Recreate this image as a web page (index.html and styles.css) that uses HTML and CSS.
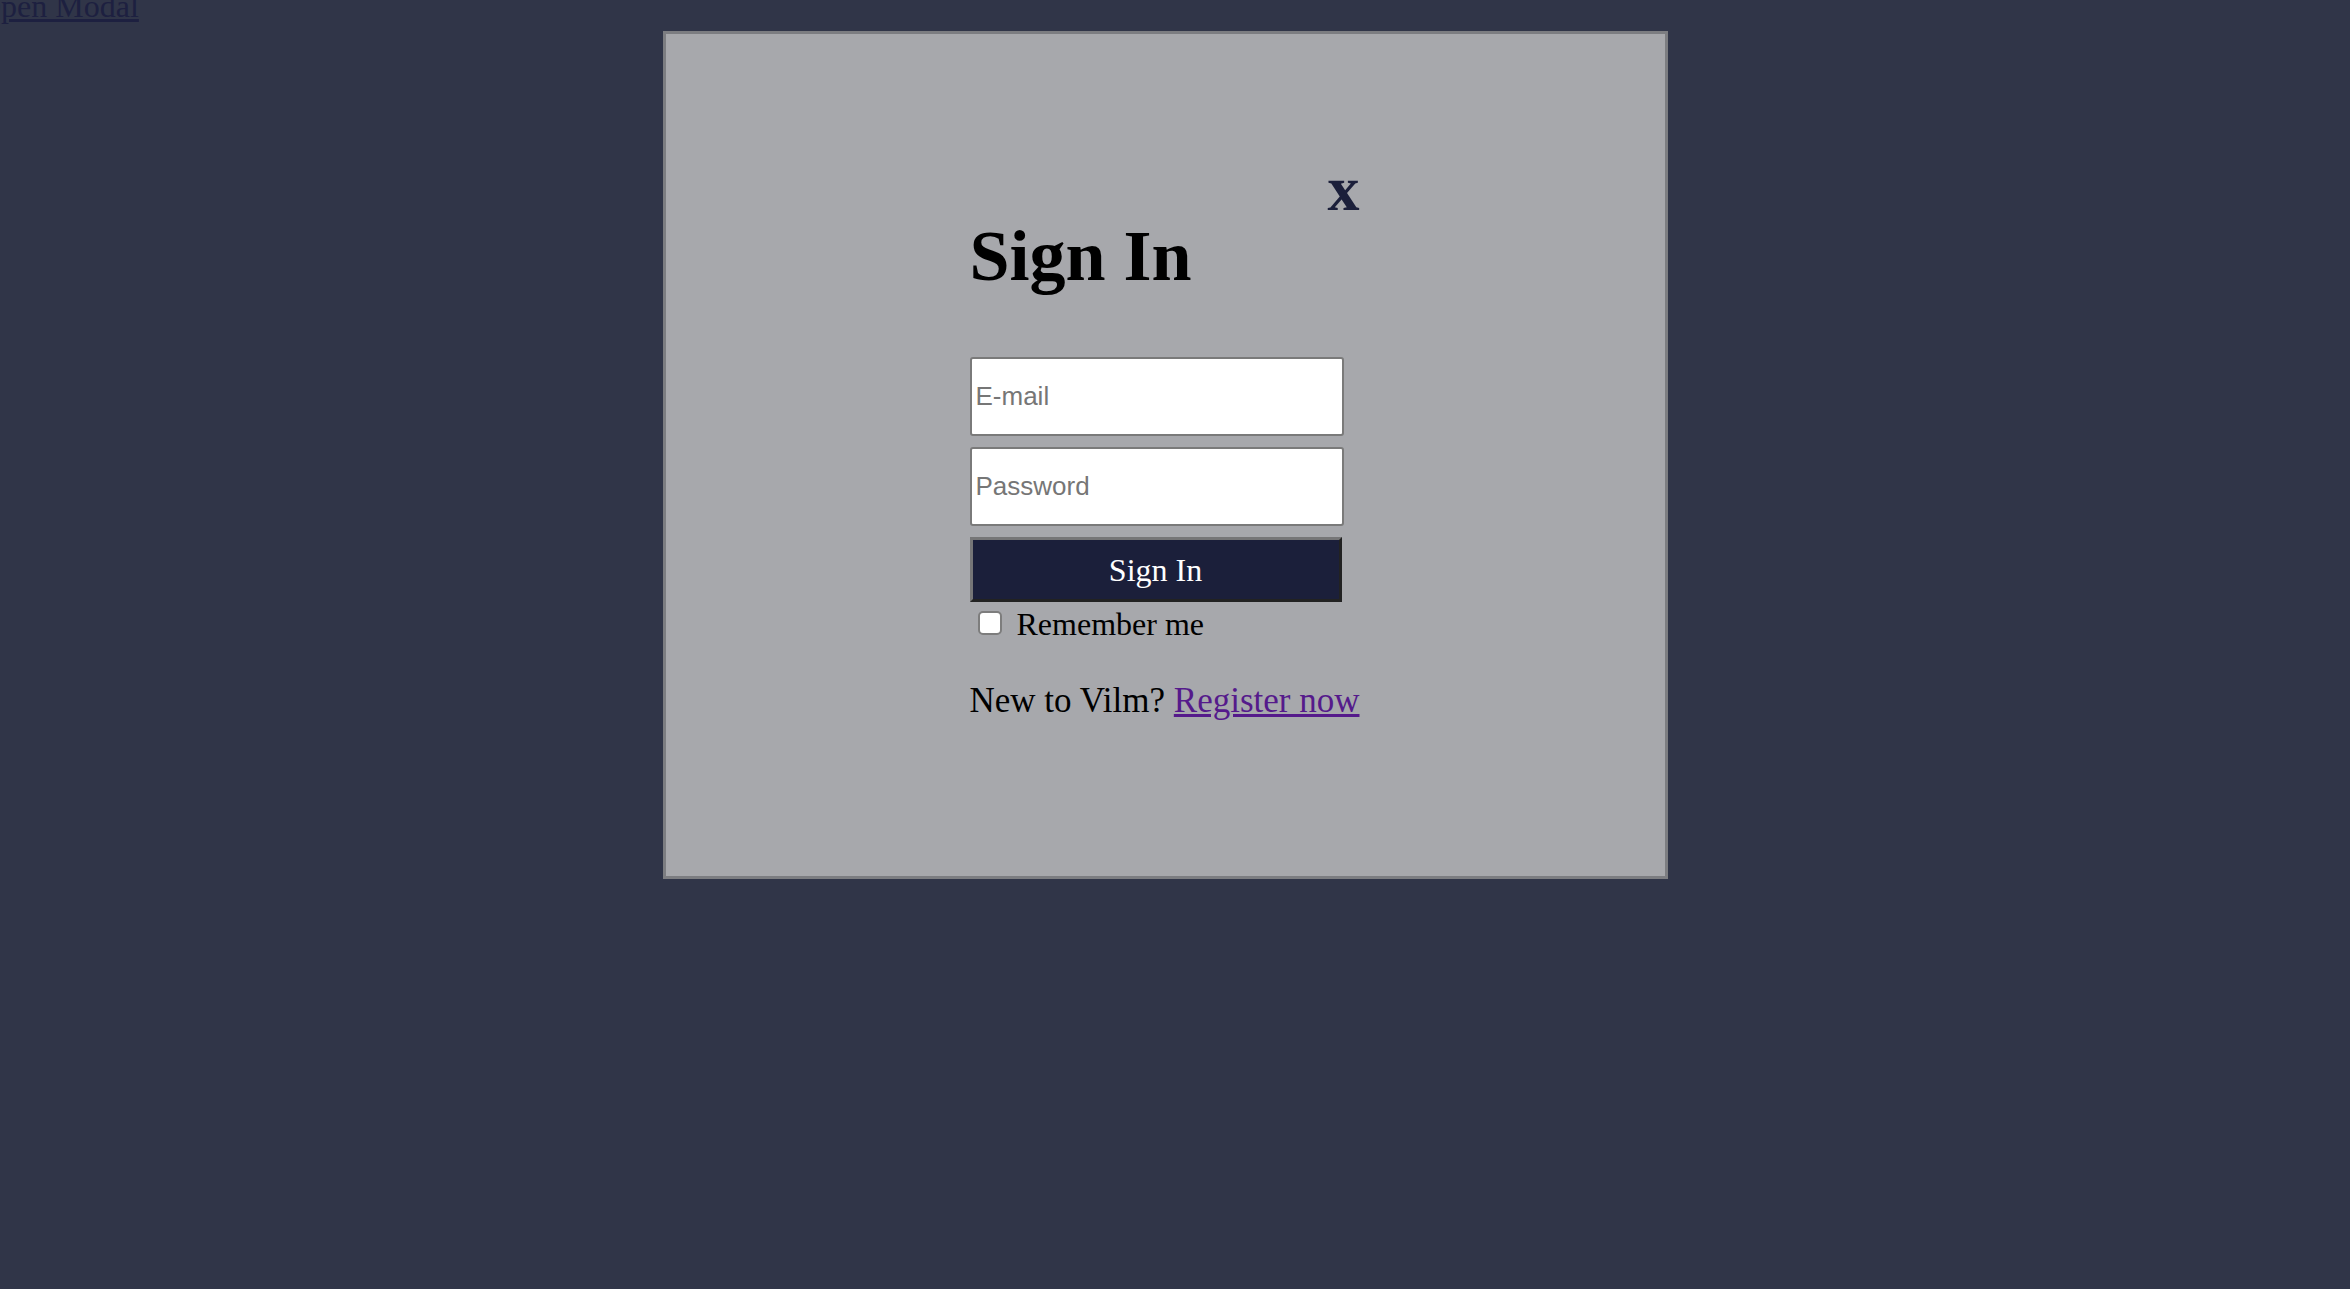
FILE: index.html
```html
<!DOCTYPE html>
<html lang="en">
<head>
<meta charset="utf-8">
<title>Sign In</title>
<link rel="stylesheet" href="styles.css">
</head>
<body>
<a class="open-modal" href="#">Open Modal</a>
<div class="modal">
  <div class="dialog">
    <div class="close-row"><span class="close">x</span></div>
    <h1 class="title">Sign In</h1>
    <form class="form">
      <input class="field" type="email" placeholder="E-mail">
      <input class="field" type="password" placeholder="Password">
      <button class="submit" type="button">Sign In</button>
      <div class="remember"><input class="check" type="checkbox" id="rem"><label for="rem">Remember me</label></div>
    </form>
    <p class="register">New to Vilm? <a class="register-link" href="#">Register now</a></p>
  </div>
</div>
</body>
</html>
```
FILE: styles.css
```css
html, body {
  margin: 0;
  padding: 0;
}
body {
  background: #303548;
  font-family: "Liberation Serif", "Times New Roman", serif;
  color: #000;
  min-height: 1289px;
}
.open-modal {
  display: inline-block;
  font-size: 32px;
  line-height: 35px;
  margin: -11px 0 0 -22px;
  color: #1d2040;
  text-decoration: underline;
}
.modal {
  position: fixed;
  left: 663px;
  top: 31px;
  width: 1005px;
  height: 848px;
  box-sizing: border-box;
  background: #a7a8ac;
  border: 3px solid #7c7d81;
  padding-top: 124px;
}
.dialog {
  width: fit-content;
  margin: 0 auto;
  transform: translateX(-1px);
}
.close-row {
  text-align: right;
  height: 62px;
}
.close {
  font-size: 64px;
  line-height: 62px;
  font-weight: bold;
  color: #1b1f3a;
  cursor: pointer;
}
.title {
  margin: 0 0 65px 0;
  font-size: 72px;
  line-height: 72px;
  font-weight: bold;
}
.form {
  margin: 0;
  display: flex;
  flex-direction: column;
  align-items: flex-start;
}
.field {
  box-sizing: border-box;
  width: 374px;
  height: 79px;
  margin: 0 0 11px 0;
  padding: 0 4px;
  background: #fff;
  border: 2px solid #7a7a7a;
  border-radius: 3px;
  font-family: "Liberation Sans", Arial, sans-serif;
  font-size: 26px;
  color: #222;
}
.field + .field {
  margin-bottom: 11px;
}
.field::placeholder {
  color: #767676;
}
.submit {
  box-sizing: border-box;
  width: 372px;
  height: 65px;
  margin: 0;
  padding: 0;
  background: #1b1f3a;
  border: 3px solid;
  border-color: #767677 #222 #222 #767677;
  color: #fff;
  font-family: "Liberation Serif", "Times New Roman", serif;
  font-size: 32px;
  line-height: 36px;
}
.remember {
  margin-top: 4px;
  font-size: 32px;
  line-height: 36px;
}
.check {
  appearance: none;
  -webkit-appearance: none;
  box-sizing: border-box;
  width: 24px;
  height: 24px;
  margin: 0 15px 0 8px;
  vertical-align: baseline;
  background: #fff;
  border: 2px solid #7d7d7d;
  border-radius: 5px;
}
.register {
  margin: 39px 0 0 0;
  font-size: 35px;
  line-height: 40px;
  white-space: nowrap;
}
.register-link {
  color: #551a8b;
  text-decoration: underline;
}
```
